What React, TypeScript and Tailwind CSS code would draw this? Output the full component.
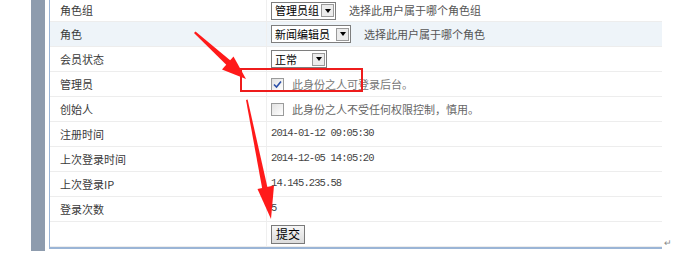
import React from 'react';

type Row = {
    label: string;
    value?: React.ReactNode;
    hover?: boolean;
};

const Select: React.FC<{ text: string; width: string }> = ({ text, width }) => (
    <div className={`flex items-center h-[18px] ${width} border border-[#7e7e7e] bg-white pl-[3px] pr-[1px]`}>
        <span className="flex-1 text-[11px] leading-none text-black">{text}</span>
        <span className="flex items-center justify-center w-[13px] h-[13px] border border-[#9a9a9a] bg-[#ececec]">
            <span className="w-0 h-0 border-l-[3px] border-r-[3px] border-t-[4px] border-l-transparent border-r-transparent border-t-black" />
        </span>
    </div>
);

const Check: React.FC<{ checked?: boolean }> = ({ checked }) => (
    <span className="flex items-center justify-center w-[13px] h-[13px] border border-[#9a9b9b] bg-gradient-to-br from-[#e2e2e2] to-white">
        {checked && (
            <svg width="9" height="9" viewBox="0 0 9 9">
                <path d="M1 4.5 L3.5 7 L8 1.5" fill="none" stroke="#2a4fa8" strokeWidth="1.6" />
            </svg>
        )}
    </span>
);

const rows: Row[] = [
    {
        label: '角色组',
        value: (
            <div className="flex items-center gap-[13px]">
                <Select text="管理员组" width="w-[65px]" />
                <span className="text-[#555]">选择此用户属于哪个角色组</span>
            </div>
        ),
    },
    {
        label: '角色',
        hover: true,
        value: (
            <div className="flex items-center gap-[13px]">
                <Select text="新闻编辑员" width="w-[80px]" />
                <span className="text-[#555]">选择此用户属于哪个角色</span>
            </div>
        ),
    },
    { label: '会员状态', value: <Select text="正常" width="w-[56px]" /> },
    {
        label: '管理员',
        value: (
            <div className="flex items-center gap-[8px]">
                <Check checked />
                <span className="text-[#777]">此身份之人可登录后台。</span>
            </div>
        ),
    },
    {
        label: '创始人',
        value: (
            <div className="flex items-center gap-[8px]">
                <Check />
                <span className="text-[#666]">此身份之人不受任何权限控制，慎用。</span>
            </div>
        ),
    },
    { label: '注册时间', value: <span className="mono">2014-01-12 09:05:30</span> },
    { label: '上次登录时间', value: <span className="mono">2014-12-05 14:05:20</span> },
    { label: '上次登录IP', value: <span className="mono">14.145.235.58</span> },
    { label: '登录次数', value: <span className="mono">5</span> },
    {
        label: '',
        value: (
            <button className="h-[19px] px-[4px] border border-[#7a7a7a] bg-gradient-to-b from-[#f6f6f6] to-[#dcdcdc] text-[12px] leading-none text-black">
                提交
            </button>
        ),
    },
];

const App: React.FC = () => {
    return (
        <div className="relative w-[697px] h-[255px] bg-white overflow-hidden font-['Noto_Sans_CJK_SC','Noto_Sans',sans-serif] text-[11px] text-[#3a3a3a]">
            <div className="flex items-start pl-[31px]">
                <div className="w-[14px] h-[251px] bg-[#8e9cae]" />
                <div className="ml-[4px] w-[613px] border-l border-b-2 border-[#9bb5d6]">
                    {rows.map((row, i) => (
                        <div
                            key={i}
                            className={`grid grid-cols-[217px_1fr] border-b border-[#ededed] ${i === 0 ? 'h-[22px]' : 'h-[25px]'} ${row.hover ? 'bg-[#eef4f9]' : ''}`}
                        >
                            <div className="flex items-center pl-[10px] border-r border-[#efefef]">{row.label}</div>
                            <div className="flex items-center pl-[4px] [&_.mono]:font-['Liberation_Mono',monospace] [&_.mono]:text-[10.5px] [&_.mono]:tracking-[-0.9px] [&_.mono]:text-[#444]">
                                {row.value}
                            </div>
                        </div>
                    ))}
                </div>
                <span className="self-end ml-[2px] mb-[4px] text-[9px] leading-none text-[#888]">↵</span>
            </div>

            {/* annotation overlay */}
            <div className="absolute left-[240px] top-[68px] w-[123px] h-[24px] border-[2.5px] border-[#ee1c1c]" />
            <svg className="absolute left-0 top-0" width="697" height="255" viewBox="0 0 697 255">
                <polygon points="194,33 195.5,31.5 231,61 227,65.5" fill="#ff1a1a" />
                <polygon points="246,79 222,69.5 233.5,56.5" fill="#ff1a1a" />
                <polygon points="246,100 247.6,99.6 268.5,192 263,193" fill="#ff1a1a" />
                <polygon points="271,219 257.5,189 274,185.5" fill="#ff1a1a" />
            </svg>
        </div>
    );
};

export default App;
